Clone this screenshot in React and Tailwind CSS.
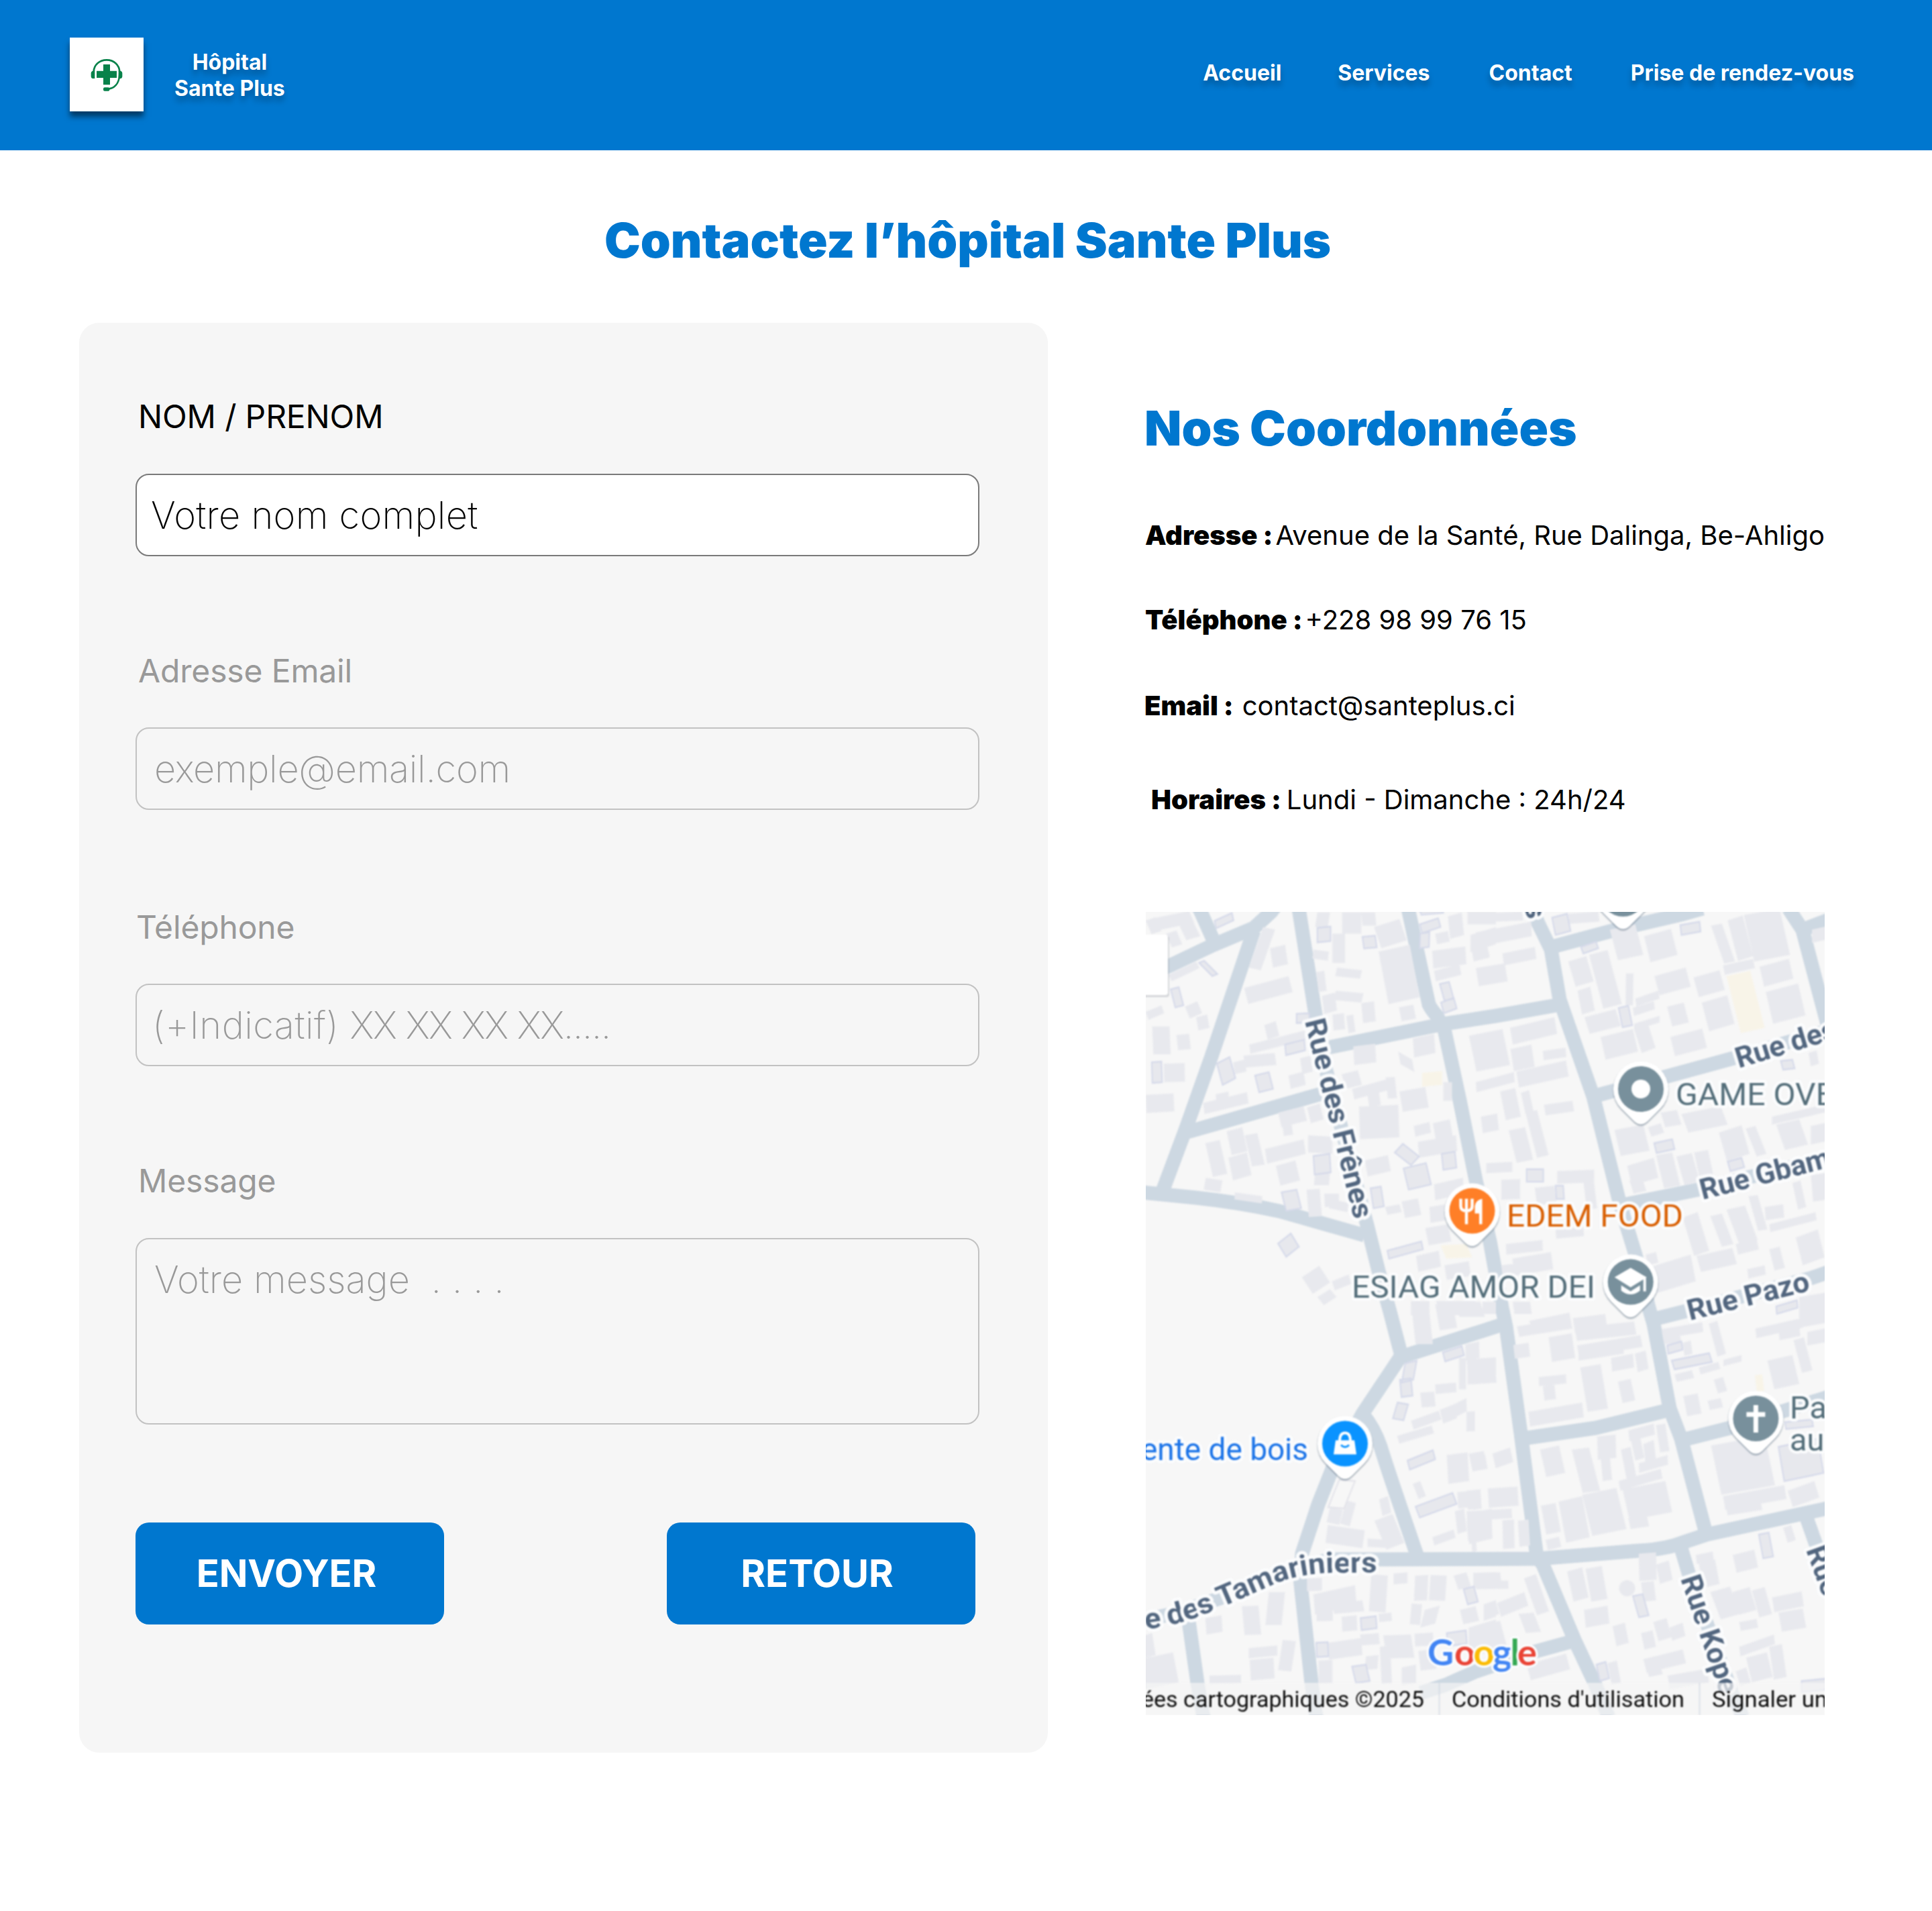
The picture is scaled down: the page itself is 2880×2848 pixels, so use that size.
import React from "react";

const ROADS = [
  "M70 -25L82 0L102 45",
  "M-10 98L34 81L99 50L161 24L187 0L200 -18",
  "M161 28L97 218L59 325L25 416",
  "M-5 418L75 426Q140 433 199 446L326 482",
  "M59 329L262 271",
  "M228 -5L252 147L264 218L330 467L347 535L364 596L381 661",
  "M268 203L444 167L522 155L613 139",
  "M391 -5L422 138Q426 146 434 155L445 175L468 281L492 400L513 491L531 590L537 618L559 777L583 961L592 973L640 1087L669 1149L690 1200",
  "M575 -8L585 17L604 56L617 131L667 275L707 436L730 511L750 590L757 614L781 740L798 785L835 926",
  "M606 52L692 29L733 19L802 3L830 -5",
  "M958 -5L979 27L1022 190",
  "M978 27L1012 14L1030 8",
  "M667 275L781 244L876 218L1020 176",
  "M710 437L823 414L1020 366",
  "M761 606L805 595L991 546L1020 536",
  "M381 663L522 618L533 614",
  "M381 661L323 748L278 830L257 883L233 956L230 993L247 1149L254 1200",
  "M323 748Q340 768 350 797Q360 830 405 961",
  "M-5 1056L45 1045L113 1022L223 977L275 965L347 965L585 964L735 952Q775 950 800 940L836 928L1020 888",
  "M63 1050L77 1149L86 1200",
  "M797 945L809 985L874 1165L890 1200",
  "M984 900L998 940L1020 990",
  "M561 785L671 769L781 742",
  "M800 787L871 769L1020 722",
  "M410 1164L447 1152L492 1132L578 1103L636 1087",
];

// Each tile lists buildings as three corners; the fourth closes the parallelogram.
const TILES = [
  {
    matrix: "matrix(0.34439 0 0 0.39541 -18 -19)",
    plain: `52,80,95,68,120,120;95,70,240,45,262,90;195,95,255,80,288,140;140,130,185,118,210,170;150,285,270,235,285,260;52,425,120,400,132,430;80,480,155,480,160,585;185,512,240,508,247,565;222,405,275,385,296,430;270,445,318,435,328,485;130,620,220,618,222,688;52,738,172,732,176,800;560,105,612,115,550,268;590,185,655,172,668,245;478,335,670,290,688,350;565,475,615,460,630,515;500,548,740,495,745,530;475,590,610,580,618,625;430,615,480,605,488,650;670,665,735,650,745,700;720,600,765,590,775,650;300,768,490,728,497,770;355,735,410,725,412,750;625,805,735,780,750,835;640,830,680,825,690,888;750,785,805,770,822,830;402,875,470,860,492,950;310,920,372,908,405,1035;410,975,490,955,510,1040;480,890,535,882,567,1000;312,1050,384,1060,375,1105;568,942,735,905,745,960;615,1005,700,985,720,1060;755,890,860,895,860,960;438,1105,557,1120,555,1147;748,1095,805,1092,815,1195;825,1110,888,1110,890,1160;850,1130,930,1145,925,1180;785,1030,850,1030,845,1078;728,1425,803,1382,850,1445;858,1440,930,1415,942,1450;795,1500,850,1470,878,1500;795,50,850,50,840,105;902,50,985,50,985,130;860,130,915,130,915,240;778,190,845,198,840,232;880,258,988,268,980,300;985,50,1045,50,1050,100;1040,105,1150,75,1182,155;1060,198,1195,172,1238,370;875,345,995,355,985,390;815,365,870,352,880,420;985,392,1040,385,1048,460;1148,408,1210,398,1222,450;920,440,950,435,960,500;860,435,910,430,915,490;790,275,825,270,835,345;950,555,1045,545,1050,615;1208,525,1300,508,1306,580;1145,575,1205,605,1215,652;900,660,970,645,988,700;945,715,1090,680,1100,720;1090,672,1130,670,1140,750;1010,730,1060,720,1070,775;1150,725,1262,708,1277,785;975,782,1145,775,1150,898;1212,855,1280,840,1287,880;1295,845,1368,830,1382,900;1230,915,1395,890,1400,950;1000,985,1100,965,1113,1025;1300,1075,1425,1050,1430,1110;1088,1160,1150,1150,1160,1180;1160,1140,1230,1128,1245,1190;1280,1160,1350,1150,1355,1210;1262,1240,1360,1225,1375,1290;1222,1345,1320,1325,1330,1385;1345,1380,1450,1365,1460,1420;1340,690,1378,690,1378,760;1200,1515,1280,1515,1280,1568;1310,1515,1480,1515,1490,1568;1360,65,1420,50,1430,135;1445,47,1568,47,1568,95;1458,135,1568,105,1568,170;1292,195,1435,178,1440,245;1300,270,1410,245,1418,285;1305,130,1360,120,1368,160;1462,190,1530,175,1540,220`,
    outlined: `350,82,425,52,432,80;795,108,852,103,852,158;990,142,1045,138,1052,182;283,240,305,232,362,282;160,340,195,332,215,400;78,615,120,612,123,690;360,620,415,595,440,675;525,665,585,652,603,715;655,548,738,530,742,570;705,432,760,430,760,465;778,968,848,960,853,1030;640,1105,705,1095,725,1165;625,1298,680,1260,715,1310;1130,955,1165,922,1235,970;1168,1015,1265,995,1287,1075;1025,1090,1070,1083,1083,1158;1098,1325,1245,1290,1252,1320;1333,960,1390,952,1397,1012;1235,35,1330,28,1340,52;1238,95,1318,72,1328,105;1240,130,1280,125,1278,180;1325,320,1365,312,1385,375;1330,390,1385,372,1398,412`,
    yellow: "1248,655,1335,648,1335,700;1328,1305,1440,1300,1465,1350",
  },
  {
    matrix: "matrix(0.34439 0 0 0.39541 492 -19)",
    plain: `0,125,240,85,242,140;0,55,200,47,205,80;115,205,255,180,262,225;0,260,125,242,138,310;0,190,50,180,60,215;148,485,340,445,352,508;-30,515,115,490,148,625;150,565,240,548,255,632;175,650,390,608,402,668;290,572,388,560,392,595;0,690,165,652,168,690;105,725,170,712,195,820;195,730,230,720,250,800;215,805,265,795,315,965;295,775,418,760,425,800;22,820,92,808,100,870;142,872,213,860,248,982;45,995,158,990,158,1028;110,1058,192,1055,192,1130;352,1025,512,1020,512,1068;255,1088,340,1080,350,1145;465,1060,510,1055,525,1165;130,1300,288,1285,290,1325;158,1355,325,1330,335,1395;110,1380,200,1370,205,1405;345,1245,465,1235,468,1270;400,55,530,47,535,85;580,115,690,95,725,210;728,140,845,112,873,210;400,235,478,215,510,310;490,210,570,192,632,395;440,345,495,330,515,420;470,445,605,415,628,478;650,280,682,280,680,400;690,375,790,345,795,375;680,410,770,385,775,415;685,470,795,440,795,465;685,490,745,470,778,560;540,520,680,490,702,575;773,290,908,258,930,330;942,295,1055,268,1078,342;828,405,900,390,922,465;978,390,1088,362,1120,470;842,520,980,488,1000,560;1018,100,1065,92,1122,235;1090,80,1155,62,1200,215;1070,250,1200,225,1208,260;1160,60,1315,35,1360,210;1228,255,1355,225,1375,300;1255,350,1395,318,1427,438;1455,115,1530,100,1530,150;600,870,725,850,752,948;745,860,800,845,815,880;800,805,870,795,890,850;890,810,1060,780,1090,850;1052,880,1150,852,1185,960;1168,865,1210,855,1258,960;1282,820,1530,770,1530,800;1300,850,1400,830,1438,925;1450,855,1530,840,1530,910;655,1005,770,975,790,1050;780,965,850,955,885,1080;868,970,935,957,970,1065;945,955,1005,945,1028,1040;665,1060,720,1050,738,1100;895,1200,960,1180,1010,1325;1015,1195,1065,1185,1115,1300;1085,1170,1165,1155,1220,1285;1180,1120,1220,1115,1262,1245;1250,1160,1330,1150,1335,1200;1270,1225,1470,1180,1475,1210;1385,1275,1480,1245,1510,1350;1270,1320,1315,1310,1338,1390;1175,1395,1250,1380,1255,1415;955,1345,1110,1315,1130,1375;1125,1300,1215,1280,1225,1320;760,1385,930,1340,952,1440;735,1340,780,1330,790,1370;1370,1070,1405,1060,1430,1160;1450,1040,1530,1030,1540,1130;1440,580,1475,570,1485,620;1400,1500,1530,1480,1530,1568`,
    outlined: `330,70,395,55,410,120;455,180,520,160,530,185;885,98,968,85,973,122;618,410,660,402,677,475;772,920,850,905,860,942;1090,990,1150,975,1162,1010;1320,610,1370,605,1380,638;220,1018,292,1018,292,1065;345,1080,378,1080,382,1130;1300,1535,1390,1512,1393,1540`,
    yellow: "1085,290,1188,270,1250,485",
  },
  {
    matrix: "matrix(0.34439 0 0 0.40816 -18 581)",
    plain: `0,1230,80,1210,95,1290;0,1310,170,1280,195,1390;310,1155,380,1145,385,1205;468,1112,540,1110,552,1215;585,1060,655,1060,640,1180;498,1265,622,1255,622,1292;502,1308,605,1300,610,1375;645,1235,702,1240,682,1350;328,1365,465,1362,465,1392;850,750,905,760,890,815;920,725,962,735,935,820;840,815,1000,835,990,900;1012,865,1110,870,1110,900;1042,800,1120,775,1172,880;1062,722,1100,710,1115,770;778,1068,958,1035,965,1110;860,1100,990,1090,998,1130;792,1132,862,1130,862,1165;750,1010,815,1008,815,1055;1028,995,1100,1000,1090,1135;1060,1140,1115,1135,1118,1165;1125,992,1185,988,1185,1028;1218,1000,1275,998,1270,1090;1285,998,1355,1000,1348,1092;1203,1102,1248,1105,1240,1180;1260,1125,1325,1110,1305,1175;1385,1000,1440,988,1460,1040;1412,1125,1480,1112,1495,1165;1515,1105,1568,1090,1568,1150;1470,990,1568,988,1568,1045;900,1150,965,1145,968,1200;840,1245,985,1228,990,1290;980,1215,1060,1210,1065,1250;1080,1218,1200,1215,1215,1300;1065,1260,1110,1255,1118,1392;1005,1295,1060,1290,1055,1340;800,1310,860,1308,860,1392;1160,1335,1222,1325,1222,1392;1232,1275,1300,1268,1310,1340;1215,1212,1295,1208,1298,1255;1450,1190,1568,1160,1568,1270;1200,0,1275,0,1295,155;1305,10,1380,0,1400,95;1390,0,1500,0,1520,55;1510,0,1568,0,1568,45;1435,155,1495,145,1497,205;1408,205,1438,205,1438,320;1445,210,1568,203,1568,295;1305,302,1395,295,1397,330;1240,332,1300,328,1307,382;1200,435,1320,398,1332,430;1140,490,1290,452,1300,480;1325,395,1385,375,1400,425;1385,375,1440,352,1442,400;1440,402,1477,400,1477,472;1355,560,1445,550,1452,655;1450,555,1515,545,1532,610;1208,665,1240,655,1265,710;1400,695,1460,690,1465,750;1465,690,1500,685,1505,755;1450,775,1550,755,1552,865;1390,765,1430,755,1442,838;1293,860,1385,832,1393,862;1460,850,1480,845,1485,910`,
    outlined: `1338,185,1420,162,1430,195;1175,225,1225,215,1210,285;1152,285,1200,280,1207,343;1142,368,1188,375,1168,433;1185,580,1295,542,1305,575;1220,748,1380,698,1398,738;1428,1050,1472,1040,1490,1095;982,1155,1048,1148,1052,1192;945,1332,1005,1325,1022,1385;790,1245,840,1243,843,1295;1355,1210,1438,1200,1442,1248`,
    hollow: "890,650,958,655,910,755",
    yellow: "",
  },
  {
    matrix: "matrix(0.34439 0 0 0.40816 492 581)",
    plain: `160,0,235,0,242,45;232,70,405,40,415,85;178,90,408,60,418,98;315,130,415,115,430,205;420,60,560,45,570,100;428,95,685,72,695,120;438,160,712,122,722,165;445,180,640,155,640,190;585,205,680,190,685,240;688,190,735,178,748,245;162,158,228,150,235,200;272,275,390,265,392,298;290,308,340,302,347,355;452,240,540,228,572,390;615,292,670,282,690,360;228,402,460,368,467,422;-40,212,80,205,90,295;72,555,148,532,162,585;-20,565,40,558,50,605;52,682,180,675,185,745;-40,690,20,685,25,755;-40,765,155,755,157,790;-40,800,65,790,72,865;115,798,165,795,168,900;182,800,228,795,235,890;278,540,360,525,387,625;415,540,490,532,538,690;525,492,605,485,608,570;540,570,580,565,590,650;628,540,670,530,695,640;660,470,770,445,775,485;670,500,710,490,730,570;725,520,770,505,780,580;780,450,820,445,838,545;705,590,830,560,832,595;618,655,800,610,808,645;635,685,820,655,850,768;660,790,740,780,750,820;282,745,345,735,368,840;358,730,460,710,493,860;460,705,608,680,652,830;302,870,360,858,370,895;805,100,980,75,985,110;805,110,880,105,890,150;1008,80,1045,70,1083,190;895,150,930,142,938,190;965,240,1050,220,1058,245;860,265,935,250,945,278;1072,212,1150,195,1150,218;1030,285,1070,275,1088,325;898,345,960,335,977,408;1003,362,1060,352,1070,385;1262,215,1370,195,1400,300;1210,98,1410,60,1415,95;1310,105,1400,90,1405,125;1375,140,1420,130,1457,250;1400,0,1530,-20,1530,75;1435,110,1530,95,1530,145;1018,525,1250,490,1295,670;1070,710,1335,670,1345,720;1080,735,1230,715,1240,760;1350,690,1465,655,1487,715;1330,825,1365,815,1385,870;1112,925,1205,905,1222,970;952,925,1025,912,1030,945;965,955,1035,940,1055,1030;1015,1060,1100,1040,1145,1140;1110,1060,1185,1042,1215,1125;1195,1055,1250,1042,1282,1140;1282,1080,1410,1058,1420,1112;1310,1135,1415,1120,1430,1190;1140,1170,1215,1158,1222,1190;1140,1260,1290,1215,1295,1250;1170,1300,1260,1280,1285,1370;1270,1260,1325,1250,1345,1370;395,985,460,970,488,1080;475,975,545,965,570,1085;468,1125,570,1110,578,1175;592,1185,645,1172,662,1245;705,920,780,915,783,1015;780,960,835,945,852,1015;715,1025,770,1020,780,1090;715,1210,765,1200,780,1260;768,1170,825,1155,848,1225;838,1190,895,1172,907,1220;725,1305,895,1270,910,1320;740,1345,800,1335,810,1360;830,1365,1000,1340,1010,1390;220,1325,390,1285,408,1342;208,1010,260,995,317,1130;0,990,105,988,110,1020;0,1020,140,1018,142,1048;92,1100,210,1060,227,1110;35,1105,85,1090,102,1140;185,1140,250,1135,282,1205;0,1185,105,1165,135,1260;570,1320,610,1310,628,1390;1125,1350,1170,1335,1190,1390`,
    outlined: `828,160,890,145,895,175;848,215,1010,188,1022,220;1225,850,1268,843,1287,930;680,1075,722,1068,748,1145;1310,530,1480,500,1505,625;1338,440,1455,430,1460,455;1410,1385,1530,1375,1530,1415;522,1325,562,1315,577,1375`,
    yellow: "1208,268,1240,265,1248,325",
  },
];

function shapes(list) {
  if (!list) return "";
  return list
    .split(";")
    .map((s) => {
      const [a, b, c, d, e, f] = s.split(",").map(Number);
      return `M${a} ${b}L${c} ${d}L${e} ${f}L${a + e - c} ${b + f - d}Z`;
    })
    .join("");
}

function Pin({ x, y, color, children }) {
  const drop = "M-29 29A41 41 0 1 1 29 29L10 48Q0 57 -10 48Z";
  return (
    <g transform={`translate(${x} ${y})`}>
      <path d={drop} fill="#5f7385" stroke="#5f7385" strokeOpacity="0.3" strokeWidth="3" opacity="0.5" transform="translate(0 2)" />
      <path d={drop} fill="#fff" />
      <circle r="34" fill={color} />
      {children}
    </g>
  );
}

const HALO = { stroke: "#fbfcfd", paintOrder: "stroke", strokeLinejoin: "round" };

function Place({ x, y, width, fill, children }) {
  return (
    <text x={x} y={y} fontSize="47" fill={fill} strokeWidth="9" textLength={width} lengthAdjust="spacingAndGlyphs" {...HALO}>
      {children}
    </text>
  );
}

function Street({ x, y, angle, width, children }) {
  return (
    <text
      transform={`translate(${x} ${y}) rotate(${angle})`}
      fontSize="43"
      fontWeight="700"
      fill="#52667f"
      strokeWidth="10"
      textLength={width}
      lengthAdjust="spacingAndGlyphs"
      {...HALO}
    >
      {children}
    </text>
  );
}

function CityMap() {
  return (
    <svg viewBox="0 0 1012 1197" className="block h-[1197px] w-[1012px] overflow-hidden" fontFamily="Roboto, sans-serif">
      <rect width="1012" height="1197" fill="#f7f7f7" />
      <g className="blur-[0.9px]">
        <g fill="none" stroke="#cdd8e2" strokeWidth="21" strokeLinejoin="round">
          {ROADS.map((d) => (
            <path key={d} d={d} />
          ))}
        </g>
        {TILES.map((t) => (
          <g key={t.matrix} transform={t.matrix}>
            <path d={shapes(t.plain)} fill="#e8e9ee" />
            <path d={shapes(t.outlined)} fill="#e7e8ed" stroke="#d6daea" strokeWidth="6" />
            <path d={shapes(t.hollow)} fill="#f7f7f7" stroke="#e4e4ea" strokeWidth="6" />
            <path d={shapes(t.yellow)} fill="#f8f4e8" />
          </g>
        ))}
        <circle cx="717.5" cy="1008" r="12" fill="#e8e9ee" />

        <rect x="-10" y="36" width="45" height="91" rx="4" fill="#8a929c" opacity="0.3" />
        <rect x="-10" y="34" width="43" height="90" rx="4" fill="#fff" />

        <Street x={564} y={-9} angle={75}>s</Street>
        <Street x={237} y={163} angle={76} width={305}>Rue des Frênes</Street>
        <Street x={884} y={233} angle={-17}>Rue des</Street>
        <Street x={830} y={429} angle={-14.4}>Rue Gbam</Street>
        <Street x={811} y={609} angle={-14} width={186}>Rue Pazo</Street>
        <Street x={797} y={994} angle={71}>Rue Kope</Street>
        <Street x={984} y={951} angle={70}>Rue</Street>
        <path id="tamariniers" d="M0 1069Q50 1064 104 1040L125 1031L189 1003Q225 987 275 985L365 984" fill="none" />
        <text fontSize="43" fontWeight="700" fill="#52667f" strokeWidth="10" {...HALO}>
          <textPath href="#tamariniers" textLength="359" lengthAdjust="spacingAndGlyphs">e des Tamariniers</textPath>
        </text>

        <Pin x={711.4} y={-27} color="#78909c" />
        <Pin x={738} y={264} color="#78909c">
          <circle r="14" fill="#fff" />
        </Pin>
        <Pin x={486.5} y={445.6} color="#ff7f27">
          <path d="M-17 -18V-7Q-17 0 -8.500 0Q0 0 0 -7V-18M-8.500 -18V20" fill="none" stroke="#fff" strokeWidth="4.500" />
          <path d="M15 -18V20H10.500V4H4V-7Q5 -16 15 -18Z" fill="#fff" />
        </Pin>
        <Pin x={722.7} y={551.6} color="#78909c">
          <path d="M-24 -7L0 -21L24 -7L0 8Z" fill="#fff" />
          <path d="M-14 5V13Q0 24 14 13V5L0 14Z" fill="#fff" />
          <path d="M21 -7V14" stroke="#fff" strokeWidth="4" />
        </Pin>
        <Pin x={297} y={792.5} color="#0a93ff">
          <path d="M-14 -5H14L17 16H-17Z" fill="#fff" />
          <path d="M-8 -4Q-8 -16 0 -16Q8 -16 8 -4" fill="none" stroke="#fff" strokeWidth="4" />
          <path d="M-6 2Q0 8 6 2" fill="none" stroke="#0a93ff" strokeWidth="3" />
        </Pin>
        <Pin x={909.4} y={755} color="#78909c">
          <path d="M0 -20V21M-14 -6H14" stroke="#fff" strokeWidth="7" />
        </Pin>

        <Place x={790} y={287.5} width={236} fill="#546e7a">GAME OVE</Place>
        <Place x={538} y={469} width={263} fill="#d95f02">EDEM FOOD</Place>
        <Place x={307} y={575} width={363} fill="#546e7a">ESIAG AMOR DEI</Place>
        <Place x={-7} y={816.5} width={249} fill="#1a73e8">ente de bois</Place>
        <Place x={960} y={754.5} fill="#546e7a">Pa</Place>
        <Place x={960} y={802.5} fill="#546e7a">au</Place>

        <text y="1122.5" fontSize="54" fontFamily="Lato, sans-serif" fontWeight="700" strokeWidth="7" {...HALO}>
          <tspan x="420" fill="#4285f4">G</tspan>
          <tspan x="460" fill="#ea4335">o</tspan>
          <tspan x="488.5" fill="#fbbc04">o</tspan>
          <tspan x="517" fill="#4285f4">g</tspan>
          <tspan x="543.5" fill="#34a853">l</tspan>
          <tspan x="554" fill="#ea4335">e</tspan>
        </text>

        <rect y="1149" width="1012" height="48" fill="#f5f5f5" opacity="0.7" />
        <path d="M437.5 1149V1197M825.5 1149V1197" stroke="#cfd6e2" strokeWidth="2" opacity="0.7" />
        <g fontSize="34" fill="#0b0b0b">
          <text x="-6" y="1185" textLength="421" lengthAdjust="spacingAndGlyphs">ées cartographiques ©2025</text>
          <text x="456" y="1185" textLength="347" lengthAdjust="spacingAndGlyphs">Conditions d'utilisation</text>
          <text x="844" y="1185" textLength="172" lengthAdjust="spacingAndGlyphs">Signaler un</text>
        </g>
      </g>
    </svg>
  );
}

function Logo() {
  return (
    <div className="h-[110px] w-[110px] bg-white shadow-[0_8px_8px_rgba(0,0,0,0.5)]">
      <svg viewBox="72 78 330 330" className="block h-full w-full">
        <g fill="#08824a">
          <path d="M222 198H252V227H282V258H252V289H222V258H192V227H222Z" />
          <path d="M184 226V261H175Q167 261 167 250V237Q167 227 184 226Z" />
          <path d="M290 226V261H299Q307 261 307 250V237Q307 227 290 226Z" />
          <rect x="222" y="301" width="28" height="16" rx="6" />
        </g>
        <path d="M179 230C180 200 205 178 237 178C270 178 294 201 295 232C296 270 282 300 248 307" fill="none" stroke="#08824a" strokeWidth="8" />
      </svg>
    </div>
  );
}

function Label({ className, children }) {
  return <div className={`h-[58px] pt-px text-[48px] leading-[58px] tracking-[-0.15px] whitespace-nowrap ${className}`}>{children}</div>;
}

function Field({ className, children }) {
  return (
    <div className={`flex h-[123px] w-[1258px] items-center rounded-[20px] border-2 text-[56px] leading-[68px] font-extralight whitespace-pre ${className}`}>
      {children}
    </div>
  );
}

function Detail({ name, className, gap, children }) {
  return (
    <div className={`flex text-[40px] leading-[48px] whitespace-nowrap ${className}`}>
      <span className="font-black">{name} :</span>
      <span className={gap}>{children}</span>
    </div>
  );
}

export default function App() {
  return (
    <div className="h-[2848px] w-[2880px] overflow-hidden bg-white font-['Inter',sans-serif] text-black">
      <header className="flex h-[224px] items-start justify-between bg-[#0077cf] pr-[116px] pl-[104px] text-[32px] leading-[38.7px] font-bold text-white">
        <div className="flex items-start pt-[56px]">
          <Logo />
          <div className="mt-[18px] ml-[46px] text-center [text-shadow:0_8px_8px_rgba(0,0,0,0.25)]">
            Hôpital
            <br />
            Sante Plus
          </div>
        </div>
        <nav className="flex pt-[90px] whitespace-nowrap [text-shadow:0_8px_8px_rgba(0,0,0,0.25)]">
          <a>Accueil</a>
          <a className="ml-[84px]">Services</a>
          <a className="ml-[88px]">Contact</a>
          <a className="ml-[87px]">Prise de rendez-vous</a>
        </nav>
      </header>

      <h1 className="mt-[90px] ml-[5px] text-center text-[72px] leading-[87px] font-black text-[#0077cf]">Contactez l’hôpital Sante Plus</h1>

      <main className="mt-[80px] flex items-start pl-[118px]">
        <form className="h-[2131px] w-[1444px] rounded-[30px] bg-[#f6f6f6] pt-[110px] pl-[84px]">
          <Label className="ml-[4px]">NOM / PRENOM</Label>
          <Field className="mt-[57px] border-[#7a7a7a] bg-white pl-[21px] tracking-[0.25px]">Votre nom complet</Field>
          <Label className="mt-[141px] ml-[4px] text-[#999]">Adresse Email</Label>
          <Field className="mt-[56px] border-[#c2c2c2] pl-[26px] tracking-[-0.3px] text-[#999]">exemple@email.com</Field>
          <Label className="mt-[145px] ml-px text-[#999]">Téléphone</Label>
          <Field className="mt-[56px] border-[#c2c2c2] pl-[23px] text-[#999]">
            <span className="tracking-[0.45px]">{"(+Indicatif) "}</span>
            <span className="tracking-[-1.47px]">XX XX XX XX.....</span>
          </Field>
          <Label className="mt-[141px] ml-[4px] text-[#999]">Message</Label>
          <div className="mt-[57px] h-[278px] w-[1258px] rounded-[20px] border-2 border-[#c2c2c2] pt-[26px] pl-[26px] text-[56px] leading-[68px] font-extralight whitespace-pre text-[#999]">
            {"Votre message  . . . ."}
          </div>
          <div className="mt-[146px] flex gap-[332px] text-[56px] leading-[68px] font-bold text-white">
            <button type="button" className="h-[152px] w-[460px] rounded-[20px] bg-[#0077cf] pr-[10px]">ENVOYER</button>
            <button type="button" className="h-[152px] w-[460px] rounded-[20px] bg-[#0077cf] pr-[12px]">RETOUR</button>
          </div>
        </form>

        <section className="ml-[144px] w-[1014px] pt-[113px]">
          <h2 className="text-[72px] leading-[87px] font-black text-[#0077cf]">Nos Coordonnées</h2>
          <Detail name="Adresse" className="mt-[93px] ml-px" gap="ml-[4px]">Avenue de la Santé, Rue Dalinga, Be-Ahligo</Detail>
          <Detail name="Téléphone" className="mt-[78px] ml-px" gap="ml-[4px]">+228 98 99 76 15</Detail>
          <Detail name="Email" className="mt-[80px]" gap="ml-[13px]">contact@santeplus.ci</Detail>
          <Detail name="Horaires" className="mt-[92px] ml-[10px]" gap="ml-[8px]">Lundi - Dimanche : 24h/24</Detail>
          <div className="mt-[143px] ml-[2px]">
            <CityMap />
          </div>
        </section>
      </main>
    </div>
  );
}
